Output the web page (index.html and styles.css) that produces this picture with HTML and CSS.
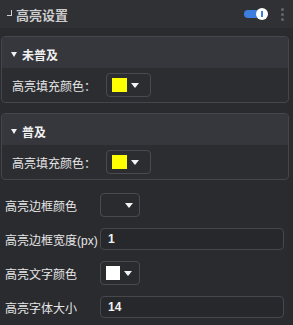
FILE: index.html
```html
<!DOCTYPE html>
<html lang="zh">
<head>
    <meta charset="UTF-8">
    <title>高亮设置</title>
    <link rel="stylesheet" href="styles.css">
</head>
<body>
    <div class="panel-head">
        <span class="corner"></span>
        <span class="panel-title">高亮设置</span>
        <span class="toggle"><span class="knob"></span></span>
        <span class="more"><i></i><i></i><i></i></span>
    </div>

    <div class="panel-body">
        <div class="card">
            <div class="card-head"><span class="caret"></span>未普及</div>
            <div class="card-row">
                <span class="label">高亮填充颜色：</span>
                <span class="color-pick"><span class="swatch yellow"></span><span class="arrow"></span></span>
            </div>
        </div>

        <div class="card">
            <div class="card-head"><span class="caret"></span>普及</div>
            <div class="card-row">
                <span class="label">高亮填充颜色：</span>
                <span class="color-pick"><span class="swatch yellow"></span><span class="arrow"></span></span>
            </div>
        </div>

        <div class="rows">
            <div class="row">
                <span class="label">高亮边框颜色</span>
                <span class="color-pick"><span class="swatch"></span><span class="arrow"></span></span>
            </div>
            <div class="row">
                <span class="label">高亮边框宽度(px)</span>
                <input class="field" type="text" value="1">
            </div>
            <div class="row">
                <span class="label">高亮文字颜色</span>
                <span class="color-pick"><span class="swatch white"></span><span class="arrow"></span></span>
            </div>
            <div class="row">
                <span class="label">高亮字体大小</span>
                <input class="field" type="text" value="14">
            </div>
        </div>
    </div>
</body>
</html>
```

FILE: styles.css
```css
body {
    margin: 0;
    background: #2a2b2f;
    color: #e6e6e6;
    font-family: "Liberation Sans", "Noto Sans CJK SC", sans-serif;
    font-size: 12px;
}

.panel-head {
    height: 28px;
    display: flex;
    align-items: center;
    padding: 0 9px 0 7px;
    background: #303135;
}
.corner {
    width: 4px;
    height: 5px;
    border-right: 1.5px solid #cfcfcf;
    border-bottom: 1.5px solid #cfcfcf;
    margin: 0 4px 2px 0;
}
.panel-title {
    flex: 1;
    font-size: 13px;
    font-weight: bold;
    color: #cdcdcd;
}
.toggle {
    position: relative;
    width: 23px;
    height: 8px;
    border-radius: 4px;
    background: #3b7ee0;
    margin-right: 14px;
}
.knob {
    position: absolute;
    right: -1px;
    top: -2px;
    width: 12px;
    height: 12px;
    border-radius: 50%;
    background: #fff;
}
.knob::after {
    content: "";
    position: absolute;
    left: 5px;
    top: 3px;
    width: 2px;
    height: 6px;
    background: #3b7ee0;
}
.more {
    display: flex;
    flex-direction: column;
    gap: 2px;
}
.more i {
    width: 3px;
    height: 3px;
    border-radius: 50%;
    background: #66676c;
}

.panel-body {
    padding: 8px 4px 0 1px;
}
.card {
    border: 1px solid #45464b;
    border-radius: 4px;
    overflow: hidden;
    margin-bottom: 10px;
    background: #2c2d31;
}
.card + .card {
    margin-bottom: 8px;
}
.card-head {
    height: 31px;
    display: flex;
    align-items: center;
    padding: 3px 0 0 9px;
    box-sizing: border-box;
    background: #36373c;
    font-size: 12px;
    font-weight: bold;
    color: #f0f0f0;
}
.caret {
    width: 0;
    height: 0;
    border-left: 3.5px solid transparent;
    border-right: 3.5px solid transparent;
    border-top: 5px solid #f0f0f0;
    margin-right: 5px;
}
.card-row {
    height: 34px;
    display: flex;
    align-items: center;
    padding-left: 10px;
}
.card-row .label {
    width: 94px;
}

.color-pick {
    width: 38px;
    height: 22px;
    border: 1px solid #4a4b50;
    border-radius: 4px;
    display: flex;
    align-items: center;
    padding-left: 5px;
    box-sizing: content-box;
}
.swatch {
    width: 15px;
    height: 14px;
}
.yellow { background: #ffff00; }
.white { background: #ffffff; width: 14px; }
.arrow {
    width: 0;
    height: 0;
    border-left: 4px solid transparent;
    border-right: 4px solid transparent;
    border-top: 5px solid #f4f4f4;
    margin-left: 4px;
}

.rows {
    padding: 0 0 0 4px;
}
.row {
    height: 34px;
    display: flex;
    align-items: center;
}
.row .label {
    width: 95px;
    flex: none;
}
.row .color-pick {
    width: 33px;
    height: 22px;
}
.field {
    flex: 1;
    height: 22px;
    box-sizing: border-box;
    border: 1px solid #47484d;
    border-radius: 4px;
    background: #27282c;
    color: #f2f2f2;
    font: bold 12px "Liberation Sans", sans-serif;
    padding: 0 7px;
    margin-right: 5px;
    outline: none;
}
```
